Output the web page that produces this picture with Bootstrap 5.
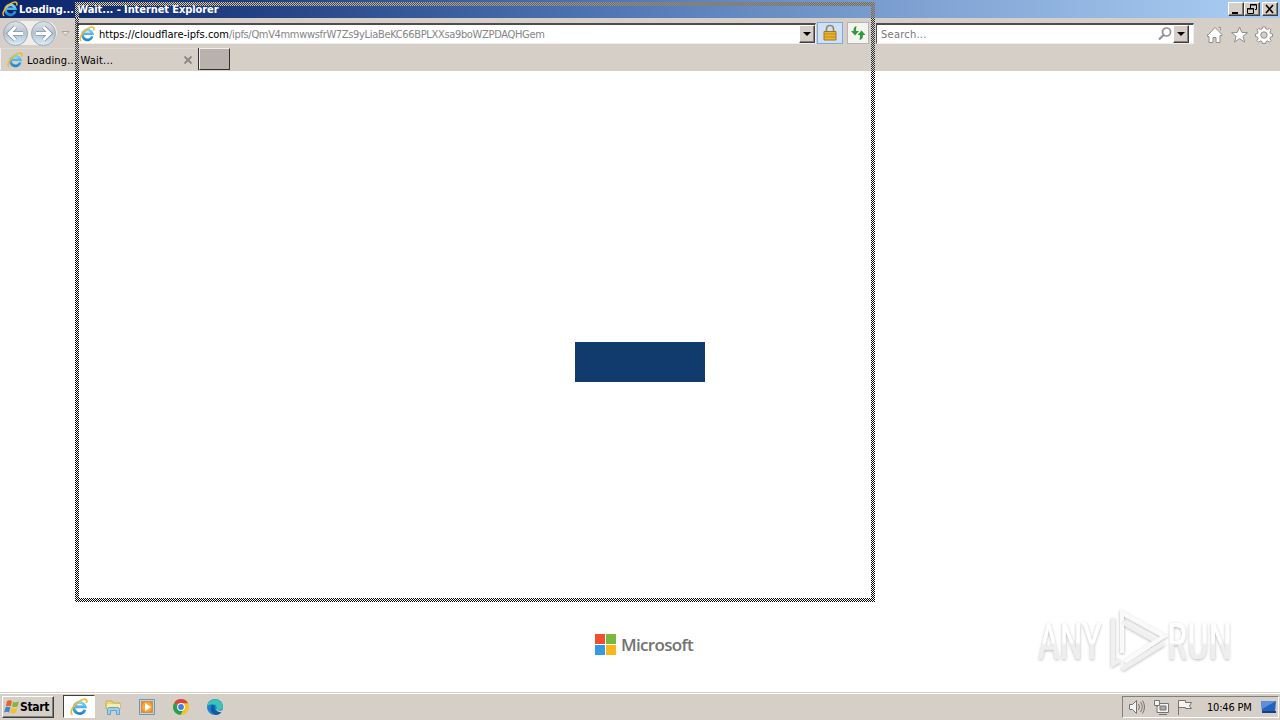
<!DOCTYPE html>
<html lang="en">
<head>
<meta charset="utf-8">
<title>Loading... Wait...</title>
<link href="https://cdn.jsdelivr.net/npm/bootstrap@5.3.0/dist/css/bootstrap.min.css" rel="stylesheet">
<style>
body{width:1280px;height:720px;overflow:hidden;font:11px/14px "DejaVu Sans Condensed","DejaVu Sans",sans-serif;font-stretch:condensed;color:#000;background:#fff}
svg{display:block;flex:none}
.face{background:#d5cfc8}
.titlebar{height:18px;background:linear-gradient(90deg,#0a246a 0,#213f82 240px,#4b70b0 570px,#7699cc 850px,#a6caf0 1240px);color:#fff;font-weight:700;padding:0 2px}
.titlebar span{letter-spacing:-.08px;margin-left:1px;padding-top:2px}
.raised{background:#d5cfc8;border:1px solid;border-color:#fff #404040 #404040 #fff;box-shadow:inset -1px -1px #808080}
.capbtn{width:16px;height:14px}
.navrow{height:30px}
.field{height:21px;margin-top:5px;background:#fff;border:1px solid;border-color:#555 #eee #eee #555;border-top-width:2px;border-top-color:#504b50}
.addr{width:739px;margin-left:4px;padding-left:1px}
.find{width:318px;margin-left:7px;padding-left:4px;color:#777}
.drop{width:16px;height:18px}
.url{margin-left:4px;letter-spacing:0;padding-top:2px}
.url i{font-style:normal;color:#858585;letter-spacing:-.33px}
.lockbtn{width:26px;height:22px;margin:4px 0 0 1px;background:#cfe1f7;border:1px solid #7fa9df}
.refbtn{width:22px;height:22px;margin:4px 0 0 4px;background:#f3f3f0;border:1px solid #b8b4ae}
.tabrow{height:23px}
.tab1{width:198px;height:22px;border-left:1px solid #f4f2ee;border-top:1px solid #dedad4;padding-left:5px}
.tabtx{letter-spacing:.18px;margin-left:3px;padding-top:2px}
.fs{letter-spacing:.25px;padding-top:2px}
.newtab{width:31px;height:22px;margin-left:1px;background:#b9b1ac;border:1px solid;border-color:#f0eeea #303030 #303030 #f0eeea;box-shadow:-1px 0 #303030}
.page{height:621px;position:relative}
.loader{width:130px;height:40px;margin-top:271px;background:#123b6d}
.brand{margin-top:252px;height:21px;margin-left:8px}
.brand span{font:600 17px/21px "Open Sans",sans-serif;color:#737373;letter-spacing:-.65px}
.ms{width:21px;height:21px;display:grid;grid-template-columns:10px 10px;gap:1px;margin-right:5px}
.ms b{height:10px}
.taskbar{height:28px;border-top:1px solid #d5cfc8;box-shadow:inset 0 1px #fff;padding:2px 2px 2px}
.start{width:52px;height:22px;font-weight:700;font-size:12px;padding-left:1px}
.start span{letter-spacing:-.3px}
.task{width:32px;height:23px;margin-left:9px;background:#fff;border:1px solid;border-color:#404040 #fff #fff #404040}
.tray{width:157px;height:22px;border:1px solid;border-color:#808080 #fff #fff #808080;padding-left:5px;margin-right:-1px}
.clock{letter-spacing:-.2px;margin-left:13px;padding-top:2px}
/* drag outline: every second pixel takes the inverse of what lies beneath */
.dragframe{position:absolute;left:75px;top:2px;pointer-events:none}
.wm{position:absolute;left:1025px;top:600px}
</style>
</head>
<body class="position-relative">
<svg width="0" height="0" class="position-absolute">
<defs>
<linearGradient id="gb" x1="0" y1="0" x2="0" y2="1"><stop offset="0" stop-color="#7cd3f7"/><stop offset="1" stop-color="#1f86cf"/></linearGradient>
<linearGradient id="gn" x1="0" y1="0" x2="0" y2="1"><stop offset="0" stop-color="#dfe5ea"/><stop offset=".5" stop-color="#b4c2d0"/><stop offset="1" stop-color="#d8f0fc"/></linearGradient>
<symbol id="ie" viewBox="0 0 16 16"><path d="M13.300 10.400A5 5 0 1 1 13.400 7.700H5" fill="none" stroke="url(#gb)" stroke-width="2.600"/><path d="M2.200 14.800C-1.200 13 3.500 5.300 9 2.500c4-2.300 7-1.900 5.600 2" fill="none" stroke="#f0b92a" stroke-width="1.500"/></symbol>
</defs></svg>

<header>
<div class="titlebar d-flex align-items-center">
<svg width="16" height="16"><use href="#ie"/></svg><span>Loading... Wait... - Internet Explorer</span>
<div class="d-flex ms-auto">
<div class="raised capbtn"><svg width="14" height="12"><path d="M3 9h6v2H3z"/></svg></div>
<div class="raised capbtn"><svg width="14" height="12" fill="none" stroke="#000"><path d="M5.500 5V1.500h6v5H10M5 2h7M2.500 5.500h6v5h-6zM2 6h7"/></svg></div>
<div class="raised capbtn" style="margin-left:2px"><svg width="14" height="12"><path d="M3 2l7 8M10 2l-7 8" stroke="#000" stroke-width="1.600"/></svg></div>
</div></div>

<div class="navrow face d-flex align-items-start">
<svg width="73" height="30"><path d="M14 3h30q12 0 13 12q-2 12-13 12H14z" fill="#f0eeeb"/><g fill="url(#gn)" stroke="#a0a9b2"><circle cx="15.500" cy="15.500" r="12"/><circle cx="43.500" cy="15.500" r="12"/></g><g fill="none" stroke="#8796a6" stroke-width="4.500"><path d="M23 15.500H10M15.500 9l-6.500 6.500 6.500 6.500"/><path d="M36 15.500h13M43.500 9l6.500 6.500-6.500 6.500"/></g><g fill="none" stroke="#fff" stroke-width="2.800"><path d="M23 15.500H10M15.500 9l-6.500 6.500 6.500 6.500"/><path d="M36 15.500h13M43.500 9l6.500 6.500-6.500 6.500"/></g><path d="M62 13.500h7l-3.500 4z" fill="#e9e6e1" stroke="#aaa49d"/></svg>
<div class="field addr d-flex align-items-center"><svg width="16" height="16"><use href="#ie"/></svg><span class="url">https://cloudflare-ipfs.com<i>/ipfs/QmV4mmwwsfrW7Zs9yLiaBeKC66BPLXXsa9boWZPDAQHGem</i></span>
<div class="raised drop ms-auto"><svg width="14" height="16"><path d="M3 6h8L7 10z"/></svg></div></div>
<div class="lockbtn d-flex justify-content-center align-items-center"><svg width="14" height="18"><path d="M3.500 9V5q0-3.500 3.500-3.500T10.500 5v4" fill="none" stroke="#8f8a70" stroke-width="1.700"/><path d="M1 7.500h12V16H1z" fill="#e9b430" stroke="#a87718"/><path d="M1 10h12M1 13h12" stroke="#b98a1c"/></svg></div>
<div class="refbtn"><svg width="20" height="20" fill="#309b35"><path d="M8.500 3Q5.500 3.500 5.500 8H3l4 4.500L11 8H8Q8 5 8.500 3zM11.500 17q3.500-.5 3.500-5h2.500l-4-4.500-4 4.500h2.500q0 3-.5 5z"/></svg></div>
<div class="field find d-flex align-items-center"><span class="fs">Search...</span><svg class="ms-auto" width="16" height="16" fill="none" stroke="#929292"><circle cx="9.500" cy="6" r="4" stroke-width="1.700"/><path d="M6.500 9L2 13.500" stroke-width="2.200"/></svg>
<div class="raised drop" style="margin-right:4px"><svg width="14" height="16"><path d="M3 6h8L7 10z"/></svg></div></div>
<svg width="80" height="30" fill="#fff" stroke="#8f8f8f"><path d="M13.500 18.500v-2h1l6.500-7 7 7v1h-2v7h-4v-5h-3v5h-4v-6zM24.500 9.500h2v3"/><path d="M45.500 9l2.300 5.400 5.700.3-4.500 3.600 1.700 5.700-5.200-3.300-5 3.300 1.600-5.700-4.500-3.600 5.700-.3z"/><path d="M68.500 9h3l.5 2 1.500.6 1.900-1.200 1.700 1.700-1.200 1.900.6 1.500 2 .5v2.500l-2 .5-.6 1.500 1.200 1.900-1.700 1.700-1.900-1.200-1.500.6-.5 2h-3l-.5-2-1.500-.6-1.900 1.200-1.700-1.700 1.200-1.900-.6-1.500-2-.5V16l2-.5.6-1.500-1.200-1.900 1.700-1.700 1.900 1.200 1.500-.6z"/><circle cx="70" cy="17" r="3.200" fill="#d5cfc8"/></svg>
</div>
<div class="tabrow face d-flex">
<div class="tab1 d-flex align-items-center"><svg width="18" height="16"><use href="#ie" width="16" height="16" x="1"/></svg><span class="tabtx">Loading... Wait...</span><svg class="ms-auto" width="15" height="10"><path d="M1.500 1.500l7 7M8.500 1.500l-7 7" stroke="#8c8782" stroke-width="1.800"/></svg></div>
<div class="newtab"></div>
</div>
</header>

<main class="page bg-white d-flex flex-column align-items-center">
<div class="loader"></div>
<div class="brand d-flex align-items-center"><div class="ms"><b style="background:#f05030"></b><b style="background:#7bb83d"></b><b style="background:#349be0"></b><b style="background:#fbb61a"></b></div><span>Microsoft</span></div>
</main>

<footer class="taskbar face d-flex align-items-center">
<div class="raised start d-flex align-items-center"><svg width="16" height="16"><path d="M3 2q2.500-1.500 5 0L6.800 7.200q-2.500-1-5 .3z" fill="#e9602a"/><path d="M9 2.800q2.500 1.200 6-.3l-1.500 5q-3 1.200-5.500 0z" fill="#80b83b"/><path d="M1.500 8.500q2.500-1.300 5 0L5 13.500q-2.500-1.300-5 0z" fill="#3b87d0"/><path d="M7.700 8.800q2.500 1.200 5.500 0l-1.500 5q-3 1.300-5.500 0z" fill="#f7bf2c"/></svg><span>Start</span></div>
<div class="task d-flex justify-content-center align-items-center"><svg width="18" height="18"><use href="#ie"/></svg></div>
<svg width="140" height="22"><path d="M11 5h6l1 2h7v6H11z" fill="#ecd67c" stroke="#c9ad54"/><path d="M12 8h13v5H12z" fill="#f8edac"/><path d="M12.500 18.500v-5q0-2 2-2h8q2 0 2 2v5h-3v-4h-6v4z" fill="#9bd0ea" stroke="#5fa4c8"/>
<path d="M44.500 3.500h15v15h-15z" fill="#b6d7ef" stroke="#5d9bc9"/><path d="M46 5h12v12H46z" fill="#f08a1d"/><circle cx="52" cy="11" r="5" fill="#f7a845"/><path d="M50 7l6 4-6 4z" fill="#fff"/>
<circle cx="86" cy="11" r="8" fill="#f3c32b"/><path d="M86 11L79 7.200A8 8 0 0 1 93 7.200h-7z" fill="#dc4437"/><path d="M79 7.200A8 8 0 0 0 85.500 19l3.500-6.500z" fill="#27a052"/><circle cx="86" cy="11" r="3.900" fill="#fff"/><circle cx="86" cy="11" r="2.900" fill="#427fe0"/>
<circle cx="120" cy="11" r="8" fill="#1c82d2"/><path d="M112.100 10A8 8 0 0 1 128 11q0 3-4 3-3 0-2.500-2 .5-2.500-2-3.500-4-1-7.400 1.500z" fill="#3bc4b3"/><path d="M116.500 9q-3 7 4 10 4 0 6-3-8 0-7-5.500 0-2-3-1.500z" fill="#125b9f"/><path d="M121 13q3 3 8 1l-1 2q-5 1-7-3z" fill="#d5cfc8"/></svg>
<div class="tray d-flex align-items-center ms-auto"><svg width="66" height="20" fill="#f3f3f3" stroke="#77736f"><path d="M1.500 7.500h3l4-4v13l-4-4h-3z"/><path d="M10.500 7q2 3 0 6M12.500 5q3.500 5 0 10M14.500 3.500q4 6.500 0 13" fill="none"/><path d="M29.500 6.500h11v9h-11zM31 17.500h8"/><path d="M32 9h6v4h-6z" fill="#aaa"/><path d="M26.500 3.500h5v5h-5zM29 8.500v7h3" /><path d="M50.500 18V3.500h7v2h6l-2 3.500 2 2.500h-6v-1h-7" /></svg><span class="clock">10:46 PM</span><svg class="ms-auto" width="18" height="18"><path d="M1 3h15l-1 11H2z" fill="#2562bd"/><path d="M1 3h15L2 11z" fill="#5b91da"/><path d="M2 13h14v2H2z" fill="#173f86"/></svg></div>
</footer>

<svg class="wm" width="240" height="80"><defs><filter id="sh" x="-10%" y="-10%" width="120%" height="130%"><feDropShadow dx="0" dy="1" stdDeviation="1.800" flood-color="#000" flood-opacity=".3"/></filter><linearGradient id="wg" x1="0" y1="0" x2="0" y2="1"><stop offset=".5" stop-color="#fff"/><stop offset=".55" stop-color="#eee"/></linearGradient></defs>
<g filter="url(#sh)"><g font-family="Roboto" font-size="50" fill="url(#wg)"><text transform="translate(13 59) scale(.75 1)">ANY</text><text transform="translate(142 59) scale(.76 1)">RUN</text></g><g fill="none" stroke="#fafafa" stroke-width="4"><path d="M97 53V13l42 23-39 26"/><path d="M88 18v46l7-4M97 22l32 18M97 69l42-26" stroke="#f0f0f0"/></g></g></svg>

<svg class="dragframe" width="800" height="600" shape-rendering="crispEdges">
<defs>
<linearGradient id="ti" gradientUnits="userSpaceOnUse" x1="0" y1="0" x2="800" y2="0"><stop offset="0" stop-color="#eed38e"/><stop offset=".2" stop-color="#dec07d"/><stop offset=".62" stop-color="#b48f4f"/><stop offset="1" stop-color="#896633"/></linearGradient>
</defs>
<g fill="none" stroke-width="1" stroke-dasharray="1 1">
<path d="M0 .5H800M1 1.500H800M0 2.500H800M1 3.500H800" stroke="url(#ti)"/>
<path d="M.5 4V16M1.500 5V16M2.500 4V16M3.500 5V16" stroke="#eed38e"/>
<path d="M796.500 4V16M797.500 5V16M798.500 4V16M799.500 5V16" stroke="#896633"/>
<path d="M.5 16V69M1.500 17V69M2.500 16V69M3.500 17V69M796.500 16V69M797.500 17V69M798.500 16V69M799.500 17V69" stroke="#2a3037"/>
<path d="M.5 70V596M1.500 69V596M2.500 70V596M3.500 69V596M796.500 70V596M797.500 69V596M798.500 70V596M799.500 69V596M0 596.500H800M1 597.500H800M0 598.500H800M1 599.500H800" stroke="#000"/>
</g></svg>
<script src="https://cdn.jsdelivr.net/npm/bootstrap@5.3.0/dist/js/bootstrap.bundle.min.js"></script>
</body>
</html>
